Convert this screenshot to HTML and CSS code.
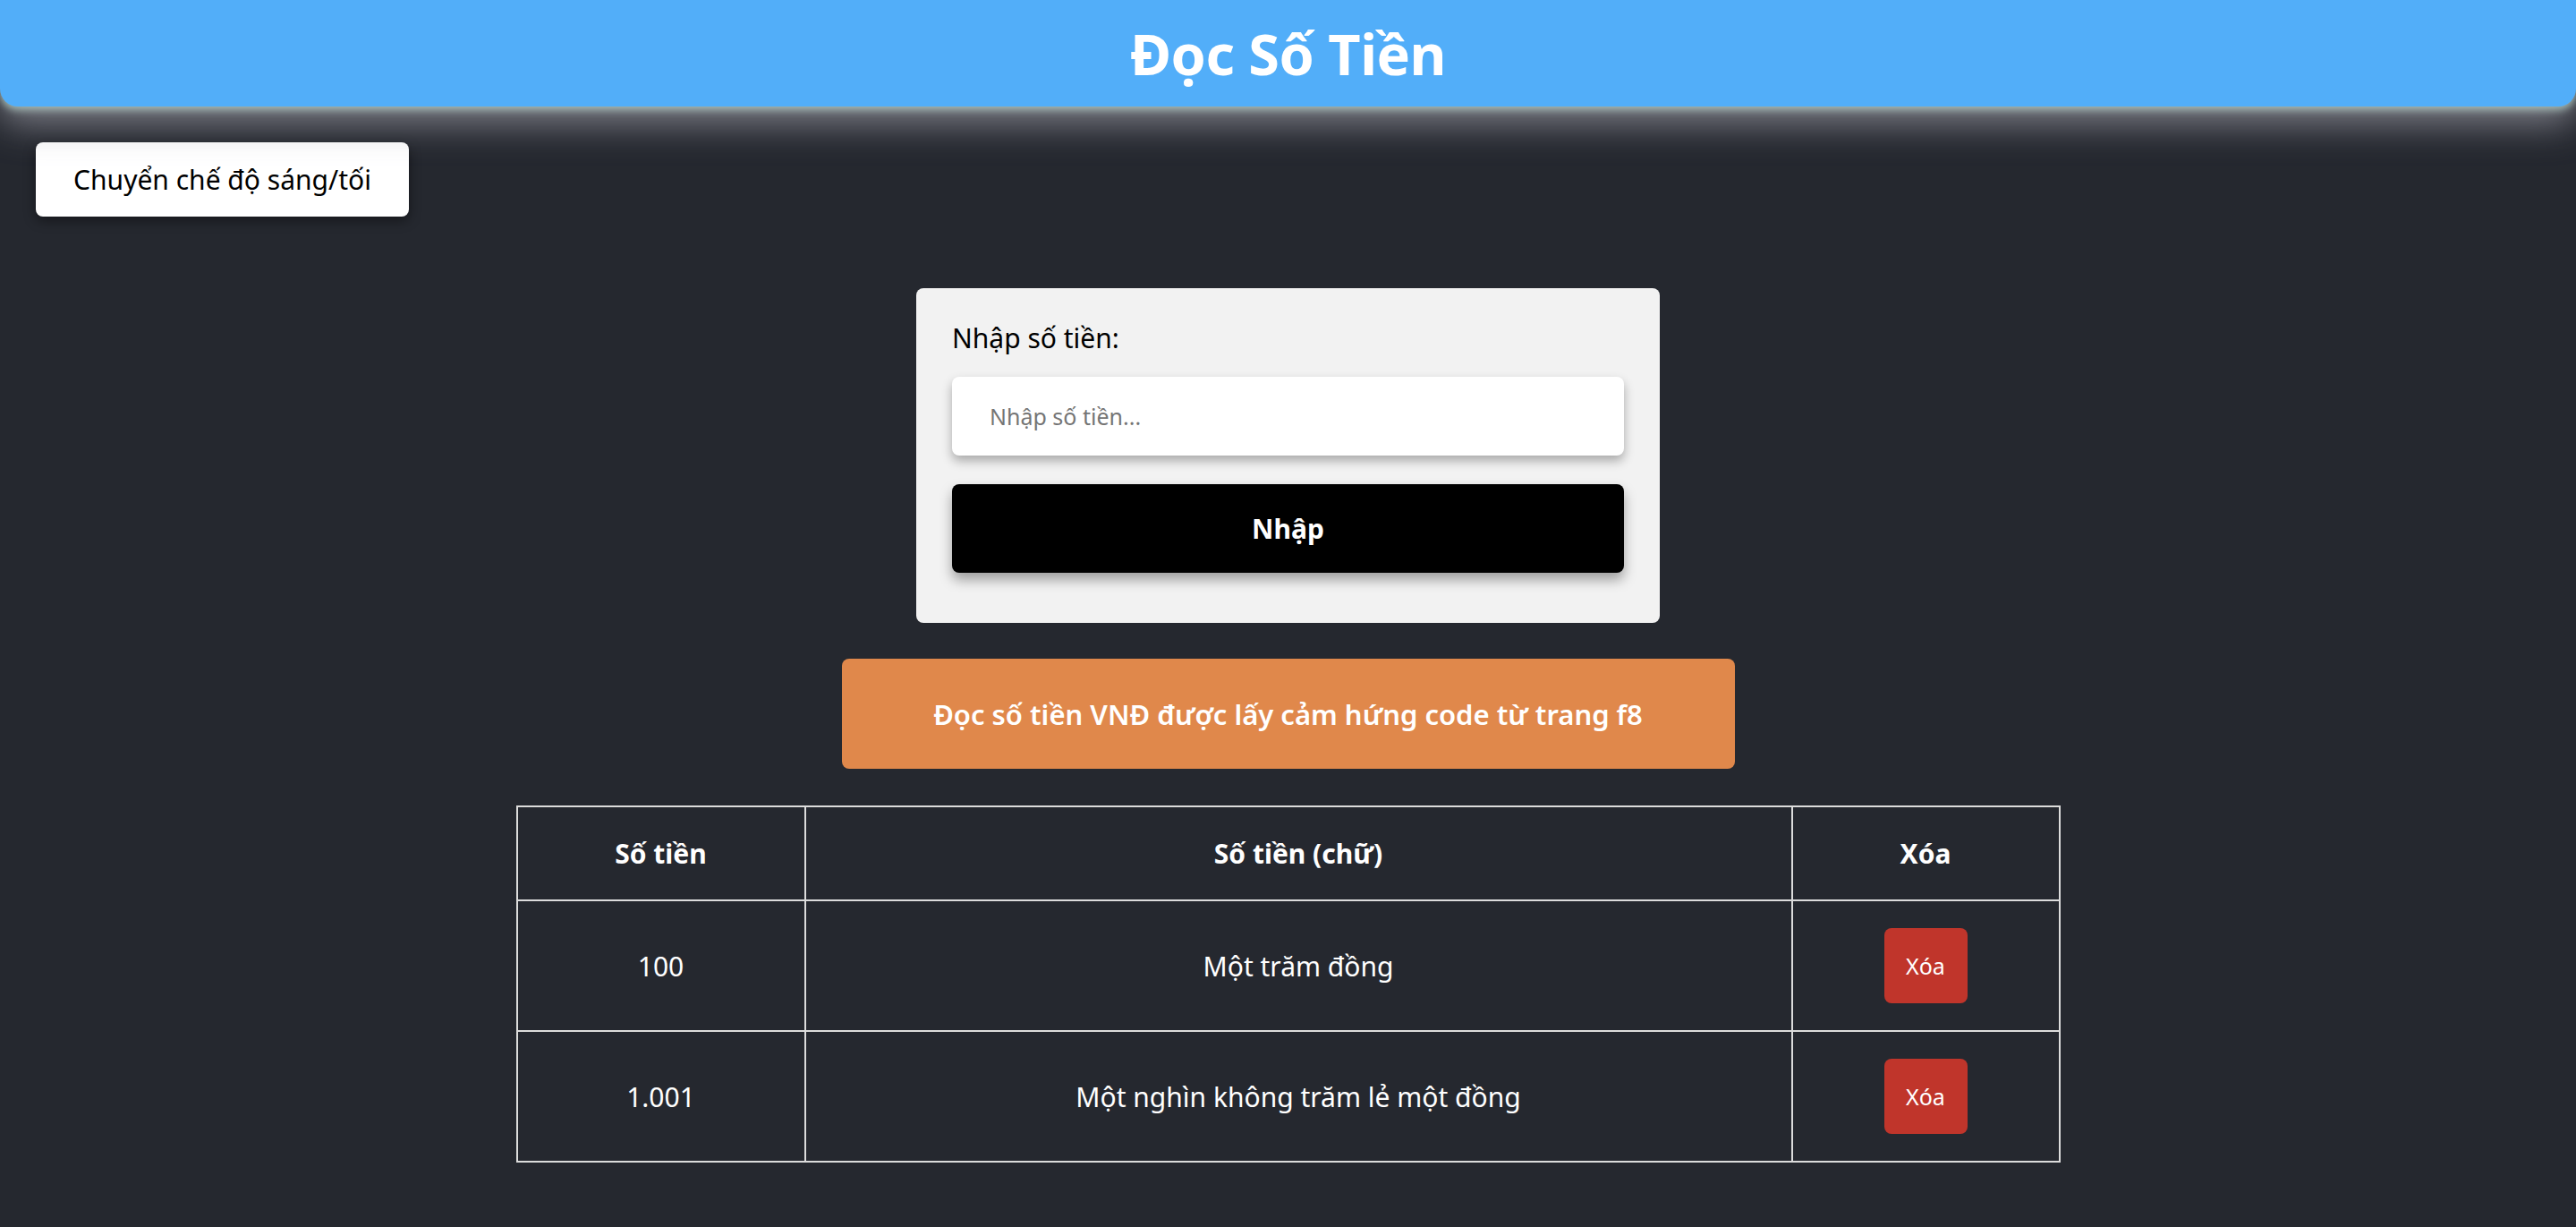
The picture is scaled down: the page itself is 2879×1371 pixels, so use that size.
FILE: index.html
```html
<!DOCTYPE html>
<html lang="vi">
<head>
<meta charset="utf-8">
<title>Đọc Số Tiền</title>
<link rel="stylesheet" href="styles.css">
</head>
<body>
<header class="topbar">
  <h1 class="title">Đọc Số Tiền</h1>
</header>
<main class="page">
  <button class="toggle" type="button">Chuyển chế độ sáng/tối</button>
  <section class="card">
    <label class="card-label" for="amount">Nhập số tiền:</label>
    <input class="card-input" id="amount" type="text" placeholder="Nhập số tiền...">
    <button class="card-submit" type="button">Nhập</button>
  </section>
  <div class="banner">Đọc số tiền VNĐ được lấy cảm hứng code từ trang f8</div>
  <table class="result">
    <thead>
      <tr class="head-row">
        <th class="col-num">Số tiền</th>
        <th class="col-text">Số tiền (chữ)</th>
        <th class="col-del">Xóa</th>
      </tr>
    </thead>
    <tbody>
      <tr class="data-row">
        <td>100</td>
        <td>Một trăm đồng</td>
        <td><button class="del" type="button">Xóa</button></td>
      </tr>
      <tr class="data-row">
        <td>1.001</td>
        <td>Một nghìn không trăm lẻ một đồng</td>
        <td><button class="del" type="button">Xóa</button></td>
      </tr>
    </tbody>
  </table>
</main>
</body>
</html>
```

FILE: styles.css
```css
html, body {
  margin: 0;
  padding: 0;
  background: #25282f;
}
body {
  font-family: "Noto Sans", "Open Sans", sans-serif;
  min-height: 100vh;
}
.topbar {
  height: 119px;
  background: #52aef9;
  border-radius: 0 0 20px 20px;
  display: flex;
  align-items: center;
  justify-content: center;
  box-shadow: 0 4px 8px rgba(180, 210, 200, 0.75), 0 18px 40px rgba(150, 150, 160, 0.8);
  position: relative;
}
.title {
  margin: 0;
  color: #fff;
  font-size: 63px;
  font-weight: 700;
  line-height: 1;
  letter-spacing: -0.5px;
}
.page {
  display: flex;
  flex-direction: column;
  align-items: center;
  padding-bottom: 60px;
}
.toggle {
  align-self: flex-start;
  margin: 40px 0 0 40px;
  width: 417px;
  height: 83px;
  background: #fff;
  color: #000;
  border: none;
  border-radius: 8px;
  font-family: inherit;
  font-size: 30px;
  box-shadow: 0 4px 14px rgba(0, 0, 0, 0.45);
  padding: 0;
}
.card {
  margin-top: 80px;
  width: 831px;
  box-sizing: border-box;
  padding: 36px 40px 56px;
  background: #f2f2f2;
  border-radius: 8px;
  display: flex;
  flex-direction: column;
}
.card-label {
  font-size: 30px;
  color: #000;
  line-height: 40px;
  margin-bottom: 23px;
}
.card-input {
  height: 88px;
  box-sizing: border-box;
  border: none;
  border-radius: 8px;
  background: #fff;
  padding: 0 42px;
  font-family: inherit;
  font-size: 25px;
  box-shadow: 0 6px 12px rgba(0, 0, 0, 0.3);
  outline: none;
}
.card-input::placeholder {
  color: #757575;
}
.card-submit {
  margin-top: 32px;
  height: 99px;
  border: none;
  border-radius: 8px;
  background: #000;
  color: #fff;
  font-family: inherit;
  font-size: 30px;
  font-weight: 700;
  box-shadow: 0 8px 14px rgba(0, 0, 0, 0.35);
}
.banner {
  margin-top: 40px;
  width: 998px;
  height: 123px;
  border-radius: 8px;
  background: #e0884b;
  color: #fff;
  font-size: 31px;
  font-weight: 600;
  display: flex;
  align-items: center;
  justify-content: center;
}
.result {
  margin-top: 41px;
  width: 1726px;
  border-collapse: collapse;
  table-layout: fixed;
  color: #fff;
  font-size: 30px;
}
.result th, .result td {
  border: 2px solid #dcdcdc;
  text-align: center;
  vertical-align: middle;
  padding: 0;
}
.head-row {
  height: 105px;
}
.head-row th {
  font-weight: 700;
}
.col-num { width: 320px; }
.col-del { width: 297px; }
.data-row {
  height: 146px;
}
.del {
  width: 93px;
  height: 84px;
  border: none;
  border-radius: 8px;
  background: #c0352b;
  color: #fff;
  font-family: inherit;
  font-size: 25px;
  padding: 0;
}
```
